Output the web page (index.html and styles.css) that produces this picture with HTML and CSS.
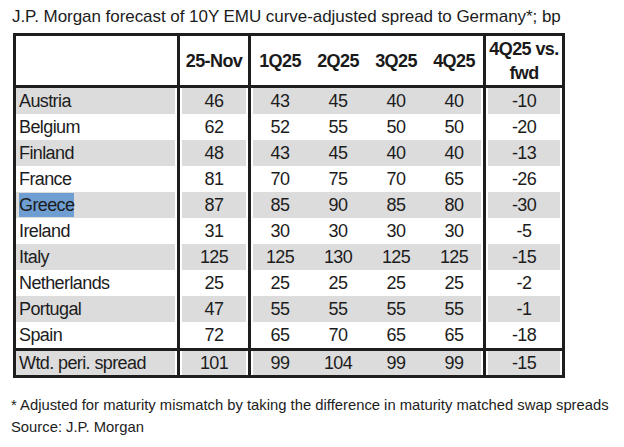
FILE: index.html
```html
<!DOCTYPE html>
<html lang="en">
<head>
<meta charset="utf-8">
<title>J.P. Morgan forecast of 10Y EMU curve-adjusted spread</title>
<link rel="stylesheet" href="styles.css">
</head>
<body>
<div class="page">
  <h1 class="title">J.P. Morgan forecast of 10Y EMU curve-adjusted spread to Germany*; bp</h1>
  <table class="spreads">
    <colgroup>
      <col class="c-label">
      <col class="c-now">
      <col class="c-q"><col class="c-q"><col class="c-q"><col class="c-q">
      <col class="c-diff">
    </colgroup>
    <thead>
      <tr>
        <th class="label"></th>
        <th class="now">25-Nov</th>
        <th class="q first">1Q25</th>
        <th class="q">2Q25</th>
        <th class="q">3Q25</th>
        <th class="q">4Q25</th>
        <th class="diff">4Q25 vs.<br>fwd</th>
      </tr>
    </thead>
    <tbody>
      <tr class="shade"><td class="label">Austria</td><td class="now">46</td><td class="q first">43</td><td class="q">45</td><td class="q">40</td><td class="q">40</td><td class="diff">-10</td></tr>
      <tr><td class="label">Belgium</td><td class="now">62</td><td class="q first">52</td><td class="q">55</td><td class="q">50</td><td class="q">50</td><td class="diff">-20</td></tr>
      <tr class="shade"><td class="label">Finland</td><td class="now">48</td><td class="q first">43</td><td class="q">45</td><td class="q">40</td><td class="q">40</td><td class="diff">-13</td></tr>
      <tr><td class="label">France</td><td class="now">81</td><td class="q first">70</td><td class="q">75</td><td class="q">70</td><td class="q">65</td><td class="diff">-26</td></tr>
      <tr class="shade"><td class="label"><span class="selected">Greece</span></td><td class="now">87</td><td class="q first">85</td><td class="q">90</td><td class="q">85</td><td class="q">80</td><td class="diff">-30</td></tr>
      <tr><td class="label">Ireland</td><td class="now">31</td><td class="q first">30</td><td class="q">30</td><td class="q">30</td><td class="q">30</td><td class="diff">-5</td></tr>
      <tr class="shade"><td class="label">Italy</td><td class="now">125</td><td class="q first">125</td><td class="q">130</td><td class="q">125</td><td class="q">125</td><td class="diff">-15</td></tr>
      <tr><td class="label">Netherlands</td><td class="now">25</td><td class="q first">25</td><td class="q">25</td><td class="q">25</td><td class="q">25</td><td class="diff">-2</td></tr>
      <tr class="shade"><td class="label">Portugal</td><td class="now">47</td><td class="q first">55</td><td class="q">55</td><td class="q">55</td><td class="q">55</td><td class="diff">-1</td></tr>
      <tr class="last"><td class="label">Spain</td><td class="now">72</td><td class="q first">65</td><td class="q">70</td><td class="q">65</td><td class="q">65</td><td class="diff">-18</td></tr>
    </tbody>
    <tfoot>
      <tr class="shade total"><td class="label">Wtd. peri. spread</td><td class="now">101</td><td class="q first">99</td><td class="q">104</td><td class="q">99</td><td class="q">99</td><td class="diff">-15</td></tr>
    </tfoot>
  </table>
  <p class="note">* Adjusted for maturity mismatch by taking the difference in maturity matched swap spreads</p>
  <p class="source">Source: J.P. Morgan</p>
</div>
</body>
</html>
```

FILE: styles.css
```css
html, body {
  margin: 0;
  padding: 0;
  background: #ffffff;
}

body {
  font-family: "Liberation Sans", Arial, sans-serif;
  color: #1c1c1c;
  width: 624px;
  height: 447px;
  overflow: hidden;
}

.page {
  padding: 6px 0 0 12px;
}

.title {
  margin: 0;
  font-size: 17px;
  font-weight: normal;
  line-height: 22px;
  color: #1c1c1c;
  letter-spacing: -0.05px;
}

.spreads {
  margin: 5px 0 0 1px;
  border-collapse: separate;
  border-spacing: 0;
  border: 3px solid #1e1e1e;
  table-layout: fixed;
  width: 552px;
  font-size: 18px;
  letter-spacing: -0.6px;
}

.c-label { width: 164px; }
.c-now { width: 71px; }
.c-q { width: 58px; }
.c-diff { width: 79px; }

.spreads th,
.spreads td {
  padding: 0;
  text-align: center;
  vertical-align: middle;
  white-space: nowrap;
}

.spreads th {
  height: 49px;
  font-weight: bold;
  line-height: 24px;
  border-bottom: 3px solid #1e1e1e;
  color: #1a1a1a;
}

.spreads td {
  height: 26px;
  line-height: 20px;
}

.spreads .label {
  text-align: left;
  padding-left: 3px;
  border-right: 3px solid #1e1e1e;
}

.spreads .now {
  border-right: 3px solid #1e1e1e;
}

.spreads .diff {
  border-left: 3px solid #1e1e1e;
}

.spreads tr.shade td {
  background: #dcdcdc;
}

.spreads tr.shade td.label {
  box-shadow: inset -2px 0 0 #ffffff;
}

.spreads tr.shade td.now {
  box-shadow: inset 2px 0 0 #ffffff, inset -2px 0 0 #ffffff;
}

.spreads tr.shade td.first {
  box-shadow: inset 2px 0 0 #ffffff;
}

.spreads tr.shade td.q:nth-child(6) {
  box-shadow: inset -2px 0 0 #ffffff;
}

.spreads tr.shade td.diff {
  box-shadow: inset 2px 0 0 #ffffff, inset -2px 0 0 #ffffff;
}

.spreads tr.last td {
  border-bottom: 3px solid #1e1e1e;
}

.spreads tr.total td {
  height: 24px;
}

.selected {
  background: #6f9fd2;
  display: inline-block;
  line-height: 24px;
}

.note,
.source {
  margin: 0;
  font-size: 14.8px;
  line-height: 22px;
  color: #1c1c1c;
}

.note {
  margin-top: 16px;
  margin-left: -1px;
}

.source {
  margin-left: -1px;
}
```
